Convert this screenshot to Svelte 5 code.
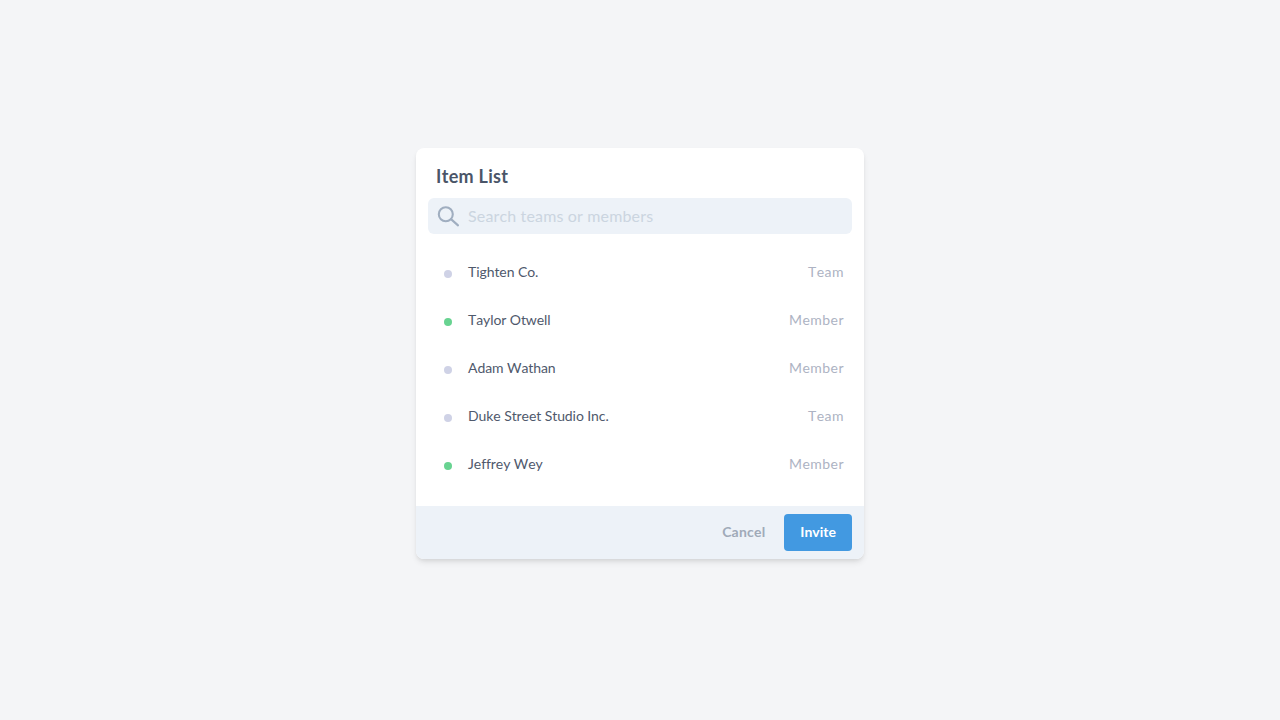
<script>
  const items = [
    { name: 'Tighten Co.', type: 'Team', online: false },
    { name: 'Taylor Otwell', type: 'Member', online: true },
    { name: 'Adam Wathan', type: 'Member', online: false },
    { name: 'Duke Street Studio Inc.', type: 'Team', online: false },
    { name: 'Jeffrey Wey', type: 'Member', online: true }
  ];
</script>

<main class="page">
  <section class="card">
    <div class="body">
      <h1>Item List</h1>
      <label class="search">
        <svg width="24" height="24" viewBox="0 0 24 24" fill="none" stroke="#a0aec0" stroke-width="2.1" aria-hidden="true">
          <circle cx="9.8" cy="10.2" r="7" />
          <path d="M15 15.1 22 21.4" stroke-linecap="round" />
        </svg>
        <input placeholder="Search teams or members" />
      </label>
      <ul>
        {#each items as item}
          <li>
            <span class="dot" class:online={item.online}></span>
            <span class="name">{item.name}</span>
            <span class="type">{item.type}</span>
          </li>
        {/each}
      </ul>
    </div>
    <footer>
      <button class="cancel">Cancel</button>
      <button class="invite">Invite</button>
    </footer>
  </section>
</main>

<style>
  :global(body) {
    margin: 0;
    background: #f4f5f7;
  }
  .page {
    box-sizing: border-box;
    min-height: 720px;
    padding-bottom: 13px;
    display: flex;
    align-items: center;
    justify-content: center;
    font-family: Lato, sans-serif;
    font-kerning: none;
  }
  .card {
    width: 448px;
    background: #fff;
    border-radius: 8px;
    overflow: hidden;
    box-shadow: 0 4px 6px -1px rgba(0, 0, 0, 0.1), 0 2px 4px -1px rgba(0, 0, 0, 0.06);
  }
  .body {
    padding: 15px 12px 18px;
  }
  h1 {
    margin: 0 0 9px 8px;
    font-size: 18px;
    line-height: 26px;
    font-weight: 700;
    letter-spacing: 0.3px;
    color: #4a5568;
  }
  .search {
    display: flex;
    align-items: center;
    height: 36px;
    background: #edf2f8;
    border-radius: 6px;
  }
  .search svg {
    flex: none;
    margin: 0 8px;
  }
  input {
    flex: 1;
    border: 0;
    background: none;
    outline: none;
    padding: 0 0 2px;
    font: inherit;
    font-size: 16px;
    letter-spacing: 0.15px;
    color: #4a5568;
  }
  input::placeholder {
    color: #cbd5e0;
    opacity: 1;
  }
  ul {
    list-style: none;
    margin: 14px 0 0;
    padding: 0;
  }
  li {
    display: flex;
    align-items: center;
    height: 48px;
    padding: 0 8px 0 16px;
    font-size: 14px;
  }
  .dot {
    width: 8px;
    height: 8px;
    border-radius: 50%;
    background: #cfd2e6;
    margin: 4px 16px 0 0;
  }
  .dot.online {
    background: #68d391;
  }
  .name {
    flex: 1;
    padding-bottom: 2px;
    letter-spacing: -0.08px;
    color: #4f596c;
  }
  .type {
    padding-bottom: 2px;
    letter-spacing: 0.45px;
    color: #adb3c3;
  }
  footer {
    display: flex;
    align-items: center;
    justify-content: flex-end;
    gap: 3px;
    height: 53px;
    padding: 0 12px;
    background: #edf2f8;
  }
  button {
    border: 0;
    font: inherit;
    font-size: 14px;
    font-weight: 700;
    height: 37px;
    padding: 0 16px 2px;
    border-radius: 4px;
  }
  .cancel {
    background: none;
    color: #a0aab8;
    letter-spacing: 0.2px;
  }
  .invite {
    background: #4299e1;
    color: #fff;
  }
</style>
